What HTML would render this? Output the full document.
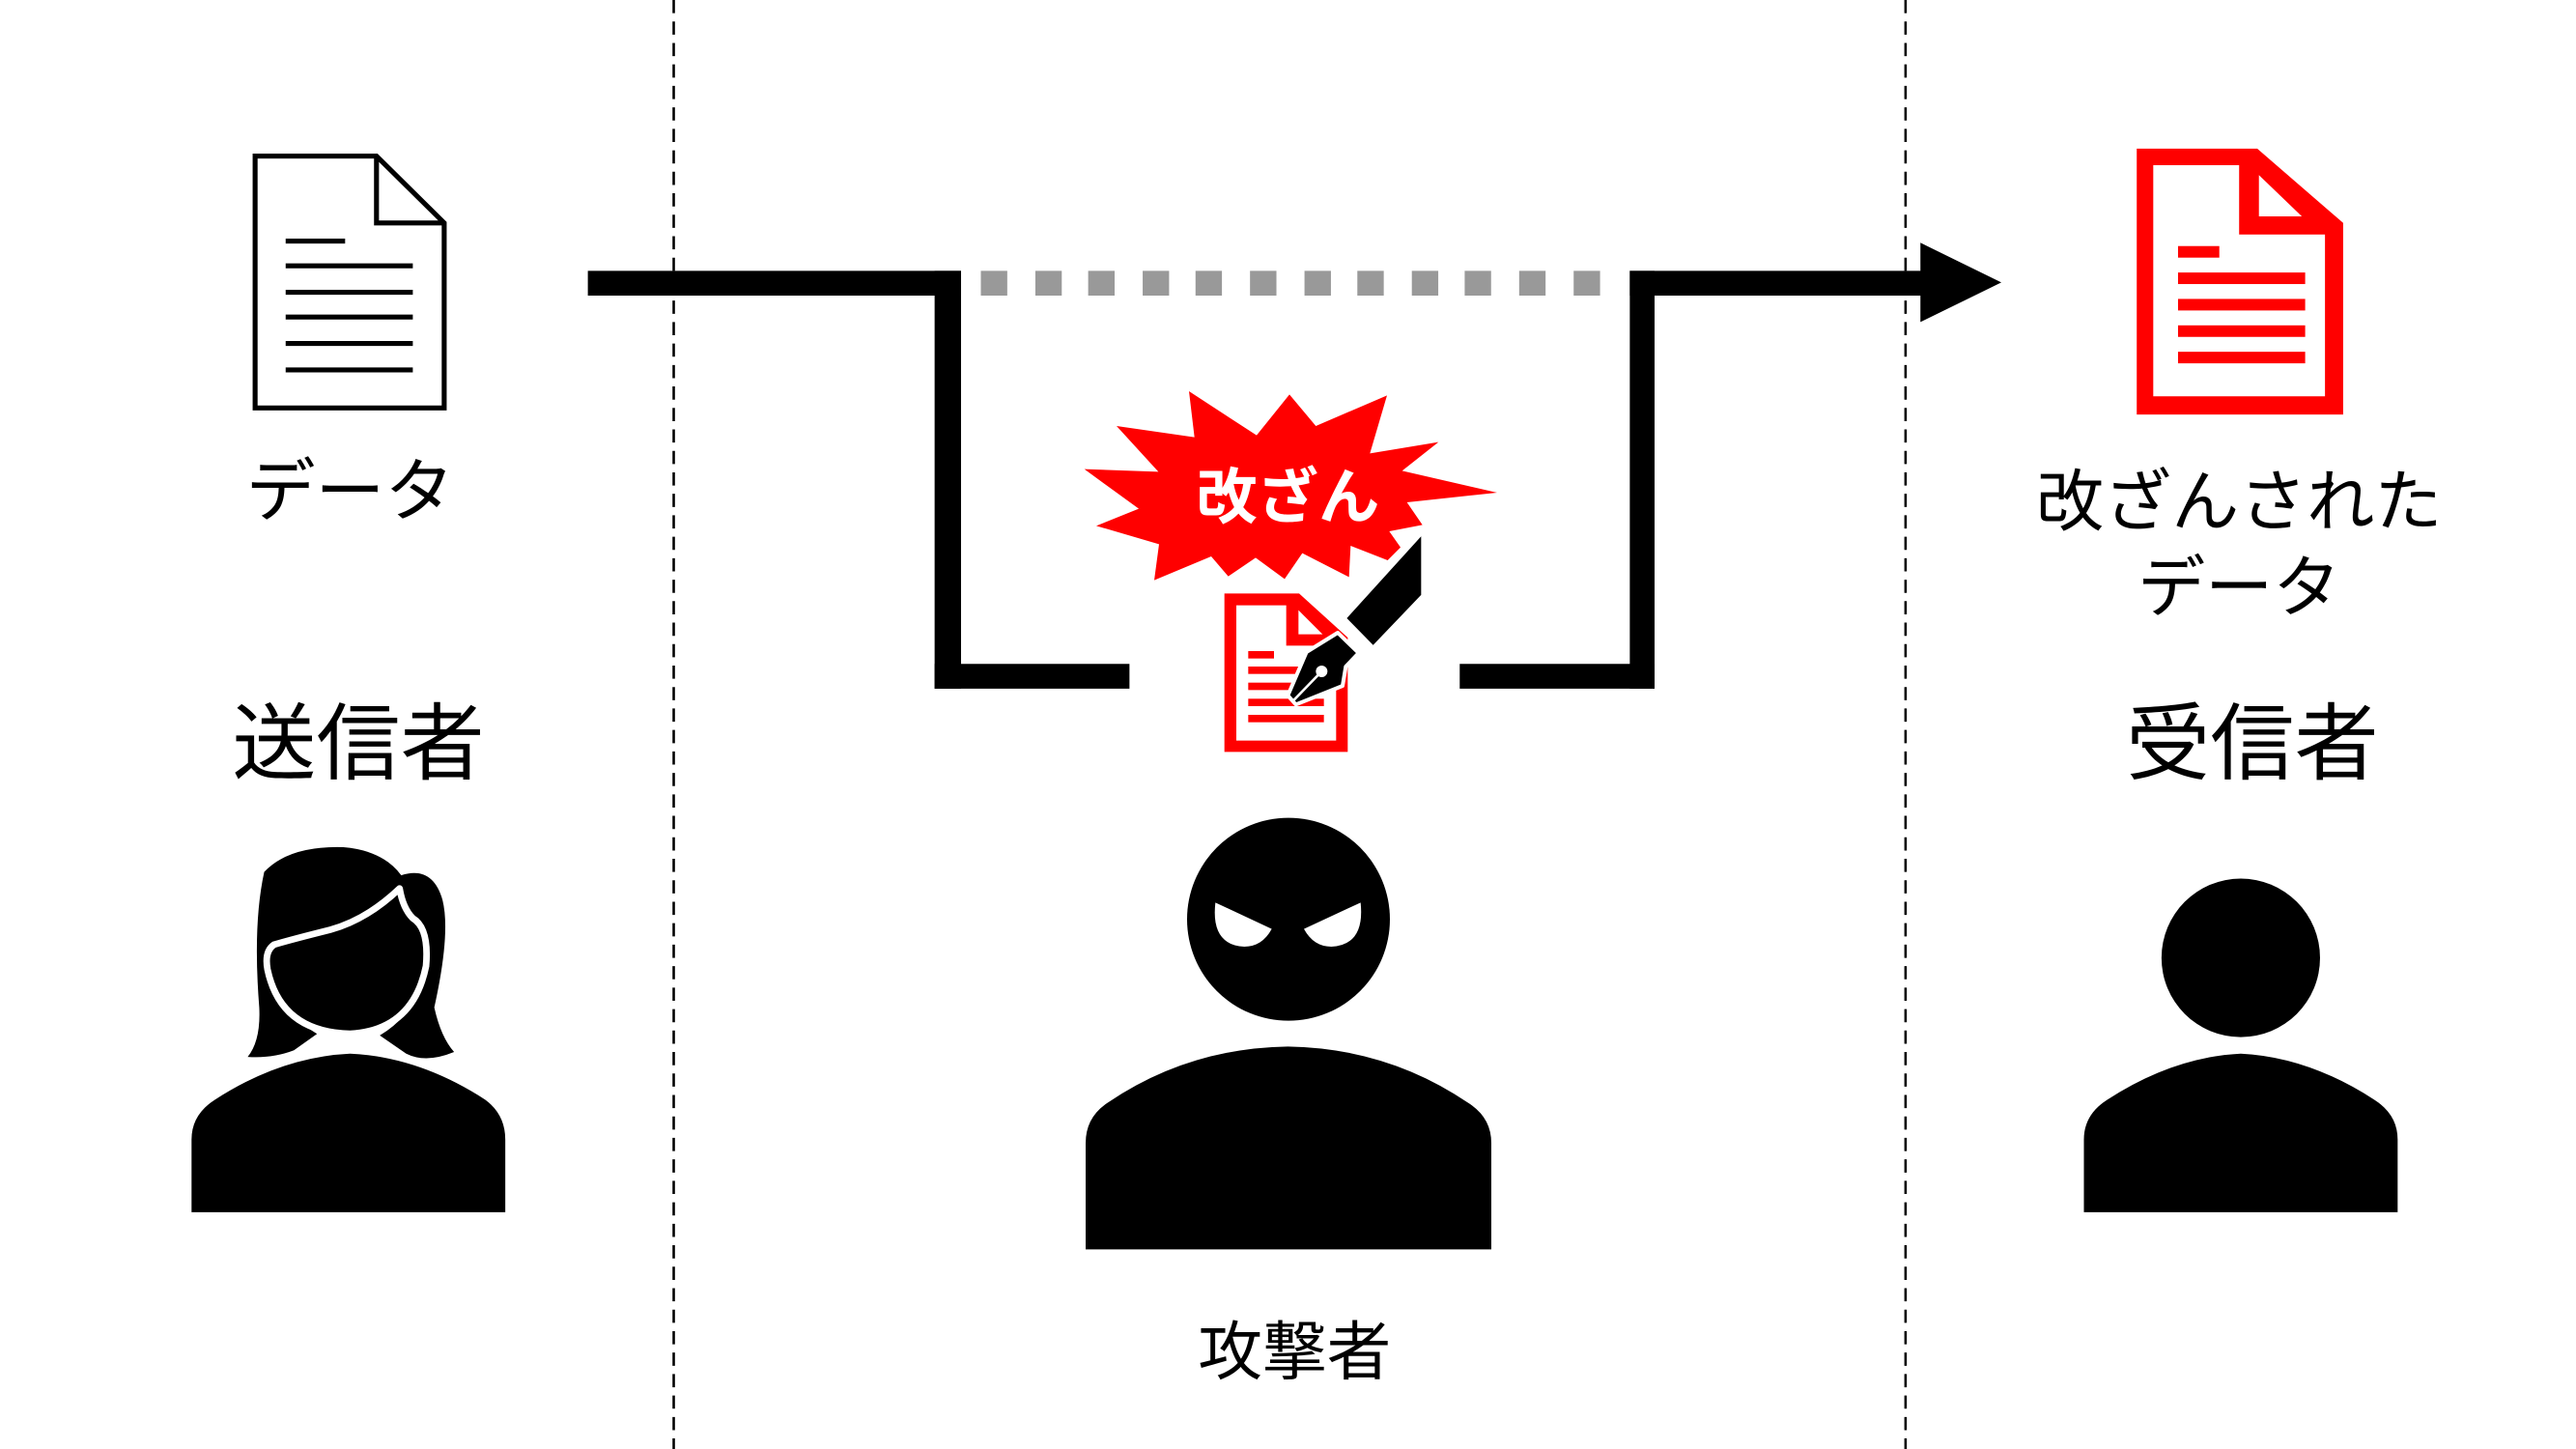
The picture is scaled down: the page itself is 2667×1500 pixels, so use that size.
<!DOCTYPE html>
<html><head><meta charset="utf-8"><style>
html,body{margin:0;padding:0;background:#fff;width:2667px;height:1500px;overflow:hidden}
svg{display:block}
text{font-family:"Liberation Sans","Noto Sans CJK JP",sans-serif}
</style></head><body>
<svg width="2667" height="1500" viewBox="0 0 2667 1500" xmlns="http://www.w3.org/2000/svg">
<g transform="scale(1.7096)">
  <!-- dashed separators -->
  <line x1="408" y1="0" x2="408" y2="880" stroke="#000" stroke-width="1.5" stroke-dasharray="8,5"/>
  <line x1="1154" y1="0" x2="1154" y2="880" stroke="#000" stroke-width="1.5" stroke-dasharray="8,5"/>

  <!-- left document -->
  <path d="M154.5,94.5 H228 L269,135 V247 H154.5 Z" fill="#fff" stroke="#000" stroke-width="3"/>
  <path d="M228,94.5 V135 H269" fill="none" stroke="#000" stroke-width="3"/>
  <g stroke="#000" stroke-width="3">
    <line x1="173" y1="146" x2="209" y2="146"/>
    <line x1="173" y1="161" x2="250" y2="161"/>
    <line x1="173" y1="177" x2="250" y2="177"/>
    <line x1="173" y1="192" x2="250" y2="192"/>
    <line x1="173" y1="208" x2="250" y2="208"/>
    <line x1="173" y1="224" x2="250" y2="224"/>
  </g>
  <text x="212" y="312" font-size="42" text-anchor="middle">データ</text>
  <text x="217" y="468" font-size="51" text-anchor="middle">送信者</text>

  <!-- woman -->
  <path d="M116,734 L116,690 Q116,675 130,666 Q170,640 212,638 Q254,640 294,666 Q306,675 306,690 L306,734Z" fill="#000"/>
  <path d="M160,528 Q175,512 208,513 Q232,515 243,530 Q262,524 268,545 Q273,565 263,610 Q267,628 275,637 Q258,644 246,638 L230,627 Q248,616 255,598 L250,560 Q243,552 242,538 Q222,557 200,563 Q176,569 166,572 Q160,576 162,587 Q168,612 192,626 L178,636 Q165,641 150,640 Q158,630 157,610 Q153,560 160,528Z" fill="#000"/>
  <path d="M242,538 Q222,557 200,563 Q176,569 166,572 Q160,576 162,587 Q170,625 212,626 Q250,624 258,585 Q260,562 250,556 Q244,550 242,538Z" fill="#000" stroke="#fff" stroke-width="4" stroke-linejoin="round"/>

  <!-- path lines -->
  <rect x="356" y="164" width="226" height="15" fill="#000"/>
  <rect x="566" y="164" width="16" height="253" fill="#000"/>
  <rect x="566" y="402" width="118" height="15" fill="#000"/>
  <g fill="#999">
    <rect x="594" y="164" width="16" height="15"/><rect x="627" y="164" width="16" height="15"/>
    <rect x="659" y="164" width="16" height="15"/><rect x="692" y="164" width="16" height="15"/>
    <rect x="724" y="164" width="16" height="15"/><rect x="757" y="164" width="16" height="15"/>
    <rect x="790" y="164" width="16" height="15"/><rect x="822" y="164" width="16" height="15"/>
    <rect x="855" y="164" width="16" height="15"/><rect x="887" y="164" width="16" height="15"/>
    <rect x="920" y="164" width="16" height="15"/><rect x="953" y="164" width="16" height="15"/>
  </g>
  <rect x="884" y="402" width="118" height="15" fill="#000"/>
  <rect x="987" y="164" width="15" height="253" fill="#000"/>
  <rect x="987" y="164" width="178" height="15" fill="#000"/>
  <path d="M1163,147 L1212,171 L1163,195Z" fill="#000"/>

  <!-- red document right -->
  <path d="M1294,90 H1367 L1419,135 V251 H1294Z" fill="#f00"/>
  <path d="M1304,100 H1356 V142 H1408 V240 H1304Z" fill="#fff"/>
  <path d="M1368,106 L1394,131 H1368Z" fill="#fff"/>
  <g fill="#f00">
    <rect x="1319" y="149" width="25" height="7"/>
    <rect x="1319" y="165" width="77" height="7"/>
    <rect x="1319" y="181" width="77" height="7"/>
    <rect x="1319" y="197" width="77" height="7"/>
    <rect x="1319" y="213" width="77" height="7"/>
  </g>
  <text x="1356" y="318" font-size="41" text-anchor="middle">改ざんされた</text>
  <text x="1356" y="370" font-size="41" text-anchor="middle">データ</text>
  <text x="1364" y="468" font-size="51" text-anchor="middle">受信者</text>

  <!-- receiver -->
  <circle cx="1357" cy="580" r="48" fill="#000"/>
  <path d="M1262,734 L1262,690 Q1262,675 1276,666 Q1316,640 1357,638 Q1398,640 1438,666 Q1452,675 1452,690 L1452,734Z" fill="#000"/>

  <text x="784" y="832" font-size="39" text-anchor="middle">攻撃者</text>
</g>

<!-- starburst + doc + pen (zoom3 coords) -->
<g transform="translate(1100,380) scale(0.33333)">
  <path d="M393,75 L603,212 L705,85 L787,183 L1008,88 L955,268 L1168,233 L1055,322 L1350,390 L1070,420 L1118,490 L1015,510 L1050,560 L1010,600 L895,555 L890,652 L745,578 L690,658 L600,592 L515,650 L462,588 L285,662 L300,550 L105,493 L237,440 L68,317 L298,325 L168,183 L410,218Z" fill="#f00"/>
  <text x="700" y="470" font-size="190" font-weight="bold" fill="#fff" text-anchor="middle">改ざん</text>
  <path d="M503,703 L735,703 L886,840 L886,1195 L503,1195Z" fill="#f00"/>
  <path d="M540,740 L695,740 L695,865 L850,865 L850,1160 L540,1160Z" fill="#fff"/>
  <path d="M733,755 L733,830 L808,830Z" fill="#fff"/>
  <g fill="#f00">
    <rect x="577" y="882" width="80" height="23"/>
    <rect x="577" y="930" width="235" height="23"/>
    <rect x="577" y="980" width="235" height="23"/>
    <rect x="577" y="1030" width="235" height="23"/>
    <rect x="577" y="1080" width="235" height="23"/>
  </g>
  <path d="M1120,510 L1120,710 L965,872 L875,780Z" fill="#000" stroke="#fff" stroke-width="12" stroke-linejoin="round"/>
  <path d="M855,825 L920,888 L880,930 L870,990 L725,1048 L700,1020 L758,885Z" fill="#000" stroke="#fff" stroke-width="12" stroke-linejoin="round"/>
  <line x1="805" y1="945" x2="715" y2="1038" stroke="#fff" stroke-width="8"/>
  <circle cx="805" cy="945" r="18" fill="#fff"/>
</g>

<!-- attacker (zoom4 coords) -->
<g transform="translate(1120,820) scale(0.33333)">
  <circle cx="642" cy="395" r="315" fill="#000"/>
  <path d="M415,343 L590,425 Q560,480 505,480 Q400,475 415,343Z" fill="#fff"/>
  <path d="M866,343 L690,425 Q720,480 775,480 Q880,475 866,343Z" fill="#fff"/>
  <path d="M12,1420 L12,1090 Q12,1010 80,965 Q330,795 640,790 Q950,795 1200,965 Q1272,1010 1272,1090 L1272,1420Z" fill="#000"/>
</g>
</svg>
</body></html>
